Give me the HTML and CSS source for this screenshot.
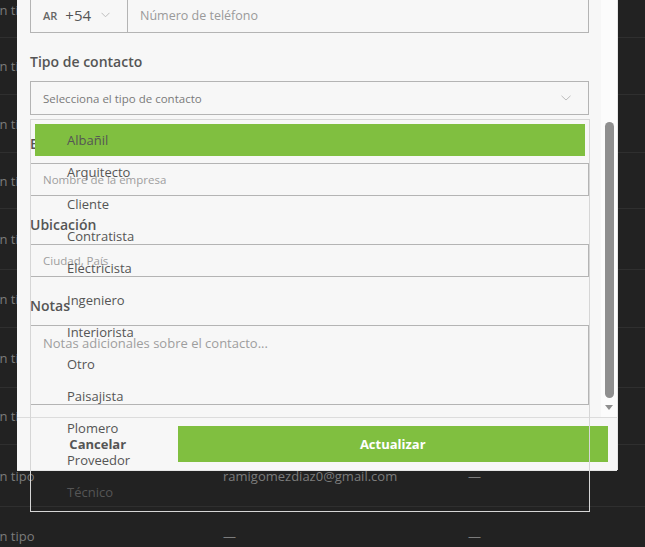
FILE: index.html
```html
<!DOCTYPE html>
<html lang="es">
<head>
<meta charset="utf-8">
<title>Editar contacto</title>
<link rel="stylesheet" href="styles.css">
</head>
<body>
<div class="page">
  <div class="table">
    <div class="row h56"><span class="c1">Sin tipo</span><span class="c2"></span><span class="c3"></span></div>
    <div class="row h57"><span class="c1">Sin tipo</span><span class="c2"></span><span class="c3"></span></div>
    <div class="row h58"><span class="c1">Sin tipo</span><span class="c2"></span><span class="c3"></span></div>
    <div class="row h56"><span class="c1">Sin tipo</span><span class="c2"></span><span class="c3"></span></div>
    <div class="row h61"><span class="c1">Sin tipo</span><span class="c2"></span><span class="c3"></span></div>
    <div class="row h58"><span class="c1">Sin tipo</span><span class="c2"></span><span class="c3"></span></div>
    <div class="row h60"><span class="c1">Sin tipo</span><span class="c2"></span><span class="c3"></span></div>
    <div class="row h57"><span class="c1">Sin tipo</span><span class="c2"></span><span class="c3"></span></div>
    <div class="row h62"><span class="c1">Sin tipo</span><span class="c2">ramigomezdiaz0@gmail.com</span><span class="c3">—</span></div>
    <div class="row h58"><span class="c1">Sin tipo</span><span class="c2">—</span><span class="c3">—</span></div>
  </div>

  <div class="modal">
    <div class="modal-body">
      <div class="form">
        <div class="phone">
          <div class="country">
            <span class="cc">AR</span>
            <span class="dial">+54</span>
            <svg class="chev" width="9" height="6" viewBox="0 0 9 6"><path d="M0.5 0.8 L4.5 4.8 L8.5 0.8" fill="none" stroke="#bdbdbd" stroke-width="1"/></svg>
          </div>
          <div class="phone-input">Número de teléfono</div>
        </div>

        <div class="field">
          <div class="label">Tipo de contacto</div>
          <div class="select-wrap">
            <div class="select">
              <span>Selecciona el tipo de contacto</span>
              <svg class="chev" width="10" height="6" viewBox="0 0 10 6"><path d="M0.5 0.8 L5 5 L9.5 0.8" fill="none" stroke="#bdbdbd" stroke-width="1"/></svg>
            </div>
            <ul class="listbox">
              <li class="active">Albañil</li>
              <li>Arquitecto</li>
              <li>Cliente</li>
              <li>Contratista</li>
              <li>Electricista</li>
              <li>Ingeniero</li>
              <li>Interiorista</li>
              <li>Otro</li>
              <li>Paisajista</li>
              <li>Plomero</li>
              <li>Proveedor</li>
              <li>Técnico</li>
            </ul>
          </div>
        </div>

        <div class="field">
          <div class="label">Empresa</div>
          <div class="input">Nombre de la empresa</div>
        </div>

        <div class="field">
          <div class="label">Ubicación</div>
          <div class="input">Ciudad, País</div>
        </div>

        <div class="field">
          <div class="label">Notas</div>
          <div class="textarea">Notas adicionales sobre el contacto...</div>
        </div>
      </div>
      <div class="scrollbar">
        <div class="thumb"></div>
        <div class="arrow"></div>
      </div>
    </div>
    <div class="modal-footer">
      <button class="btn-cancel">Cancelar</button>
      <button class="btn-primary">Actualizar</button>
    </div>
  </div>
</div>
</body>
</html>
```

FILE: styles.css
```css
html, body {
  margin: 0;
  padding: 0;
}
body {
  background: #222222;
  font-family: "Open Sans", "Noto Sans", sans-serif;
  overflow: hidden;
  width: 645px;
  height: 547px;
}
.page {
  position: relative;
  width: 645px;
  height: 547px;
  overflow: hidden;
}

/* background table */
.table {
  margin-top: -18px;
}
.row {
  display: flex;
  align-items: center;
  border-bottom: 1px solid #2f2f2f;
  box-sizing: border-box;
  font-size: 13px;
  color: #7c7c7c;
}
.h56 { height: 56px; }
.h57 { height: 57px; }
.h58 { height: 58px; }
.h60 { height: 60px; }
.h61 { height: 61px; }
.h62 { height: 62px; }
.c1 {
  width: 234px;
  margin-left: -11px;
  white-space: nowrap;
}
.c2 {
  width: 245px;
  white-space: nowrap;
}
.c3 {
  white-space: nowrap;
}

/* modal */
.modal {
  position: absolute;
  left: 17px;
  top: -1px;
  width: 600px;
  background: #f7f7f7;
  box-shadow: 0 1px 0 #e6e6e6, 1px 0 0 #e6e6e6;
  z-index: 2;
}
.modal-body {
  display: flex;
}
.form {
  flex: 1;
  padding: 0 12px 12px 13px;
}
.scrollbar {
  width: 16px;
  background: #fcfcfc;
  display: flex;
  flex-direction: column;
  justify-content: flex-end;
  align-items: center;
  padding-bottom: 7px;
  box-sizing: border-box;
}
.thumb {
  width: 9px;
  height: 276px;
  border-radius: 5px;
  background: #8f8f8f;
  margin-bottom: 7px;
}
.arrow {
  width: 0;
  height: 0;
  border-left: 4px solid transparent;
  border-right: 4px solid transparent;
  border-top: 5px solid #8f8f8f;
}

.phone {
  display: flex;
  height: 34px;
  border: 1px solid #b4b4b4;
  box-sizing: border-box;
}
.country {
  width: 97px;
  border-right: 1px solid #b4b4b4;
  box-sizing: border-box;
  display: flex;
  align-items: center;
  padding: 0 0 2px 12px;
}
.cc {
  font-size: 11px;
  font-weight: 600;
  color: #666;
}
.dial {
  font-size: 15px;
  color: #555;
  margin-left: 8px;
}
.country .chev {
  margin-left: 10px;
}
.phone-input {
  flex: 1;
  display: flex;
  align-items: center;
  padding: 0 0 2px 12px;
  font-size: 12.5px;
  color: #9a9a9a;
}

.label {
  font-size: 14px;
  font-weight: 600;
  color: #555;
  line-height: 20px;
  margin: 19px 0 9px;
}
.select-wrap {
  position: relative;
}
.select {
  height: 34px;
  border: 1px solid #b4b4b4;
  box-sizing: border-box;
  display: flex;
  align-items: center;
  justify-content: space-between;
  padding: 0 17px 0 12px;
  font-size: 11.5px;
  color: #7a7a7a;
}
.listbox {
  position: absolute;
  top: 38px;
  left: 0;
  width: 560px;
  box-sizing: border-box;
  margin: 0;
  padding: 4px 4px 3px;
  list-style: none;
  border: 1px solid #d6d6d6;
  background: transparent;
  z-index: 5;
}
.listbox li {
  height: 32px;
  line-height: 32px;
  padding-left: 32px;
  font-size: 13px;
  color: #555;
}
.listbox li.active {
  background: #80bf40;
}

.input {
  height: 33px;
  border: 1px solid #b4b4b4;
  box-sizing: border-box;
  display: flex;
  align-items: center;
  padding-left: 12px;
  font-size: 11.5px;
  color: #9e9e9e;
}
.textarea {
  height: 80px;
  border: 1px solid #b4b4b4;
  box-sizing: border-box;
  padding: 7px 12px;
  font-size: 13px;
  line-height: 20px;
  color: #9e9e9e;
}

.modal-footer {
  display: flex;
  gap: 8px;
  border-top: 1px solid #dcdcdc;
  padding: 8px 9px;
}
.btn-cancel,
.btn-primary {
  height: 36px;
  border: none;
  font-family: "Open Sans", "Noto Sans", sans-serif;
  font-size: 13px;
  font-weight: 700;
  padding: 0;
}
.btn-cancel {
  flex: 1;
  background: transparent;
  color: #555;
}
.btn-primary {
  flex: 3;
  background: #80bf40;
  color: #fff;
}
```
